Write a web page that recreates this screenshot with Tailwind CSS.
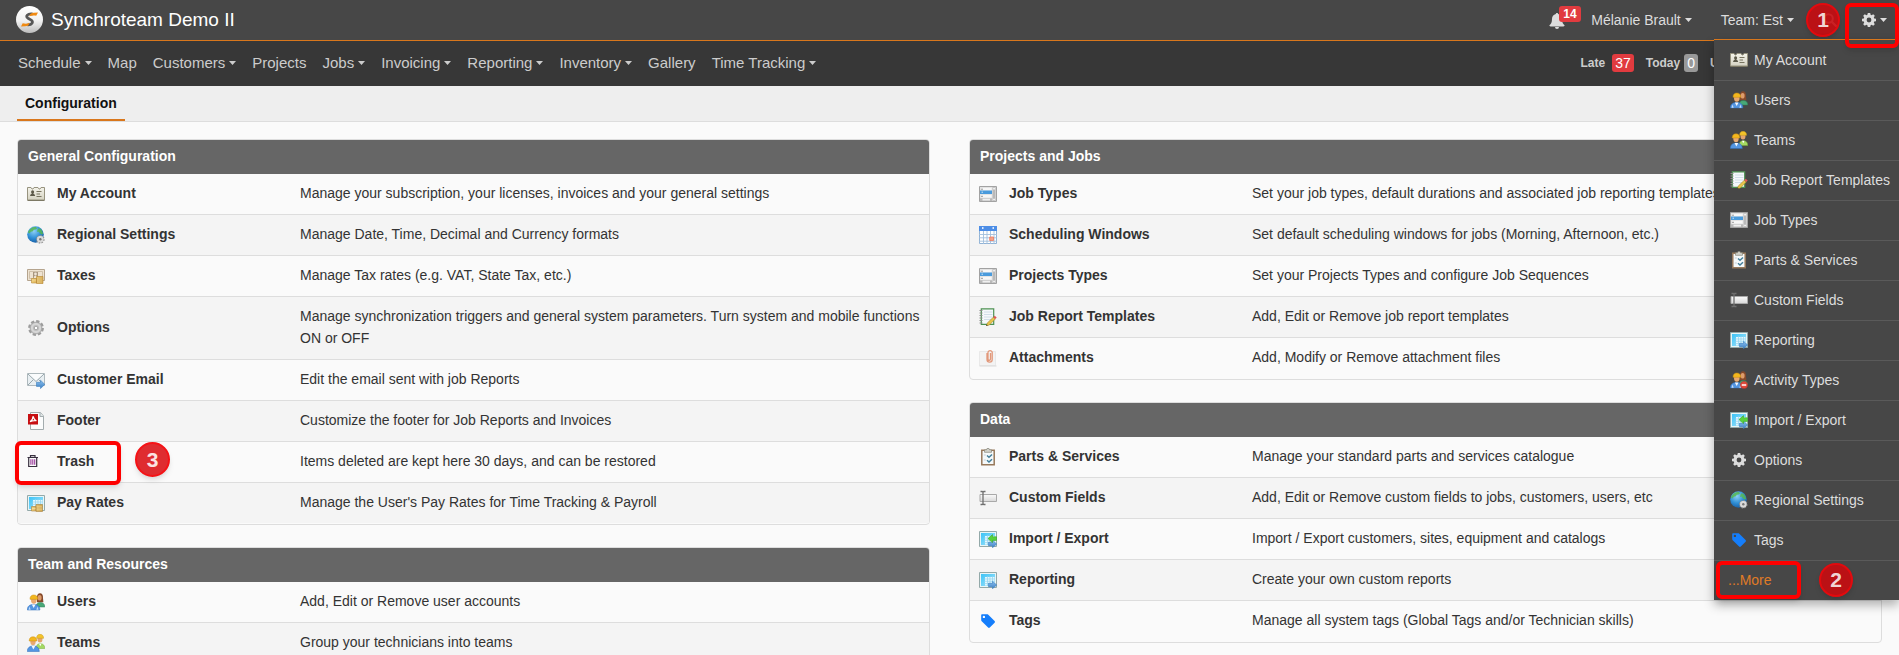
<!DOCTYPE html>
<html lang="en">
<head>
    <meta charset="UTF-8">
    <meta name="viewport" content="width=device-width, initial-scale=1.0">
    <title>Synchroteam - Configuration</title>
    <script src="https://cdn.jsdelivr.net/npm/@tailwindcss/browser@4"></script>
</head>
<body class="flex flex-col h-screen overflow-hidden bg-[#fafafa] text-[#333] text-sm font-['Liberation_Sans',Arial,sans-serif]">

    <!-- icon sprite, zero sized but not display:none so the gradients keep working -->
    <svg class="absolute size-0" aria-hidden="true">
        <defs>
            <linearGradient id="g-ball" x1="0" y1="0" x2="0" y2="1"><stop offset="0" stop-color="#fff"/><stop offset=".55" stop-color="#f2f2f2"/><stop offset="1" stop-color="#bdbdbd"/></linearGradient>
            <linearGradient id="g-card" x1="0" y1="0" x2="0" y2="1"><stop offset="0" stop-color="#f4f3ea"/><stop offset="1" stop-color="#d5d2c2"/></linearGradient>
            <radialGradient id="g-globe" cx=".4" cy=".3" r=".7"><stop offset="0" stop-color="#8fd0f5"/><stop offset=".6" stop-color="#2f8fd6"/><stop offset="1" stop-color="#1b62a8"/></radialGradient>
            <linearGradient id="g-sheet" x1="0" y1="0" x2="1" y2="1"><stop offset="0" stop-color="#3cc3f7"/><stop offset="1" stop-color="#a9e6fb"/></linearGradient>
            <linearGradient id="g-coin" x1="0" y1="0" x2="1" y2="0"><stop offset="0" stop-color="#f0cf7c"/><stop offset="1" stop-color="#c8983a"/></linearGradient>
            <linearGradient id="g-grey" x1="0" y1="0" x2="0" y2="1"><stop offset="0" stop-color="#fbfbfb"/><stop offset="1" stop-color="#d8d8d8"/></linearGradient>
            <linearGradient id="g-blue" x1="0" y1="0" x2="0" y2="1"><stop offset="0" stop-color="#8cc0ef"/><stop offset="1" stop-color="#3c80c4"/></linearGradient>
        </defs>
        <symbol id="caret" viewBox="0 0 7 4"><path fill="currentColor" d="M0 0h7L3.5 4z"/></symbol>
        <symbol id="gear" viewBox="0 0 14 14"><path fill="currentColor" fill-rule="evenodd" d="M5.800 0h2.400l.4 1.800 1 .4 1.600-1 1.600 1.600-1 1.600.4 1 1.800.4v2.400l-1.800.4-.4 1 1 1.600-1.600 1.600-1.600-1-1 .4-.4 1.800H5.800l-.4-1.800-1-.4-1.600 1-1.600-1.600 1-1.600-.4-1L0 8.200V5.800l1.800-.4.4-1-1-1.600 1.600-1.600 1.600 1 1-.4zM7 4.600a2.400 2.400 0 1 0 0 4.800 2.400 2.400 0 0 0 0-4.800z"/></symbol>
        <symbol id="bell" viewBox="0 0 16 16"><path fill="currentColor" d="M8 0c.7 0 1.200.5 1.200 1.100C11.600 1.600 13 3.500 13 6c0 3.500 1 5 2.600 6.300 0 .7-.5 1.200-1.200 1.200H1.600c-.7 0-1.200-.5-1.200-1.200C2 11 3 9.500 3 6c0-2.500 1.400-4.400 3.800-4.900C6.800.5 7.300 0 8 0zM6 14h4a2 2 0 0 1-4 0z"/></symbol>
        <symbol id="search" viewBox="0 0 14 14"><circle cx="5.500" cy="5.500" r="4.300" fill="none" stroke="currentColor" stroke-width="2"/><path d="M9 9l4 4" stroke="currentColor" stroke-width="2.400" stroke-linecap="round"/></symbol>
        <symbol id="account" viewBox="0 0 18 18">
            <path fill="url(#g-card)" stroke="#97937f" d="M.5 2.500h3.500l1 1.500h1l1-1.500h4l1 1.500h1l1-1.500h3.500v12.500H.5z"/>
            <path fill="#5d5a4a" d="M5.600 5.200a1.500 1.500 0 0 1 1.500 1.600c0 .9-.5 1.700-.9 1.900 1.200.3 1.900 1 1.900 2.300H3.100c0-1.300.7-2 1.900-2.300-.4-.2-.9-1-.9-1.900a1.500 1.500 0 0 1 1.500-1.600z"/>
            <path stroke="#77735f" d="M9.500 6.500h5M9.500 9h3.500M9.500 11.500h5"/><path stroke="#7d7965" d="M.5 15.500h17"/>
        </symbol>
        <symbol id="globe" viewBox="0 0 18 18">
            <circle cx="8.500" cy="8.500" r="8.300" fill="url(#g-globe)"/>
            <path fill="#58b947" fill-opacity=".8" d="M4 2.600c1.700-1.300 3.800-1.700 5.200-1.400l.8 1.300-1.500 1-1.700.3-1 1.400-2 .6-1.300 1.600L1 6.500c.5-1.600 1.600-3 3-3.900zM11 2.500l2.500.3 1.700 2.200.9 3-1.600.4-2-1.300-.6-1.400-2 .1z"/>
            <circle cx="13.300" cy="13.300" r="3.500" fill="#d0d0d0" stroke="#8d8d8d" stroke-width="1.600" stroke-dasharray="1.500 1.200"/><circle cx="13.300" cy="13.300" r="3.200" fill="#dadada"/><circle cx="13.300" cy="13.300" r="1.200" fill="#777"/>
        </symbol>
        <symbol id="taxes" viewBox="0 0 18 18">
            <path fill="#eee3d2" stroke="#b5a48e" d="M.5 2.500h17v11H.5z"/><path fill="none" stroke="#cfc0aa" d="M2.500 4.500h13v7h-13z"/>
            <path fill="#a8957d" d="M6 5h5v6H6z"/><circle cx="8.500" cy="7" r="1.400" fill="#efe5d6"/><path fill="#efe5d6" d="M6.800 11c0-1.800.6-2.300 1.700-2.300s1.700.5 1.700 2.300z"/>
            <path fill="url(#g-coin)" stroke="#b98a37" stroke-width=".6" d="M4.500 11.500h5v4.500h-5zM9.500 9.500h6.500v7H9.500z"/><path stroke="#f6e1a6" stroke-width=".7" d="M5 13h4M10 11h5.500M10 13h5.500M10 15h5.500"/>
        </symbol>
        <symbol id="cog" viewBox="0 0 18 18">
            <circle cx="9" cy="9" r="6.600" fill="#c6c6c6" stroke="#9d9d9d" stroke-width="2.600" stroke-dasharray="3.200 1.980"/>
            <circle cx="9" cy="9" r="5.600" fill="#d6d6d6" stroke="#a6a6a6" stroke-width=".7"/><circle cx="9" cy="9" r="3" fill="#bcbcbc"/><circle cx="9" cy="9" r="1.700" fill="#fff" stroke="#888" stroke-width=".6"/>
        </symbol>
        <symbol id="email" viewBox="0 0 18 18">
            <path fill="#e9eff2" stroke="#aeb9bd" d="M.5 2.500h17v12H.5z"/><path fill="#fafcfd" stroke="#98a7ad" d="M1 3l8 7.500L17 3M1 14l5.500-5.500M17 14l-5.500-5.500"/>
            <path fill="url(#g-blue)" stroke="#3b7dbd" stroke-width=".6" d="M9.500 11.300h4V9.200l4.300 4.200-4.300 4.200v-2.200h-4z"/>
        </symbol>
        <symbol id="pdf" viewBox="0 0 18 18">
            <path fill="#fbfcfc" stroke="#a3acae" d="M3.500.5h10L16.500 4v13.500h-13z"/><path fill="#dfe5e6" stroke="#a3acae" d="M13 .5V4.500h3.500"/>
            <path fill="#c70f12" d="M1 2h10v10.500H1z"/><path fill="none" stroke="#fff" stroke-width="1.100" d="M3 9.800C5 8.500 6 6 6 4.200c1 2.800 2 4.200 3.500 4.600-2-.4-4.500 0-6.500 1z"/>
        </symbol>
        <symbol id="trash" viewBox="0 0 18 18">
            <path fill="none" stroke="#38303f" stroke-width="1.200" d="M.5 4.500h10.500M3.500 4V2.600h4.500V4M1.700 5v8.500h8V5"/><path stroke="#9a3a9b" stroke-width="1.100" d="M3.900 6.200v5.600M5.800 6.200v5.600M7.700 6.200v5.600"/>
        </symbol>
        <symbol id="sheet" viewBox="0 0 18 18">
            <path fill="#e9f5f7" stroke="#93a9a9" d="M.5 1.500h17v15H.5z"/><path fill="url(#g-sheet)" d="M2 3h14v12H2z"/>
            <path fill="#e4f7fe" d="M6 6h9.500v8.500H6z"/><path stroke="#8fd3ee" stroke-width=".7" d="M8.500 5v10M11 5v10M13.500 5v10M5 8h11M5 10.300h11M5 12.600h11"/>
        </symbol>
        <symbol id="pay" viewBox="0 0 18 18">
            <use href="#sheet"/><path fill="url(#g-coin)" stroke="#a98443" stroke-width=".6" d="M4.500 12.500h4.500V17H4.500zM9 10.500h6.500v7H9z"/><path stroke="#f6e1a6" stroke-width=".7" d="M9.500 12.200H15M9.500 14H15M9.500 15.800H15M5 14.500h3.500"/>
        </symbol>
        <symbol id="reporting" viewBox="0 0 18 18">
            <use href="#sheet"/><path fill="url(#g-blue)" stroke="#3b7dbd" stroke-width=".6" d="M9.500 12.300h4v-2l4.200 3.700-4.200 3.700v-2h-4z"/>
        </symbol>
        <symbol id="import" viewBox="0 0 18 18">
            <use href="#reporting"/><path fill="#58d23c" stroke="#3ba728" stroke-width=".6" d="M17.500 6.800h-4V4.600L9 8.600l4.500 4v-2.200h4z"/>
        </symbol>
        <symbol id="users" viewBox="0 0 18 18">
            <path fill="#86492a" d="M10 5C9.700 2 11 .3 13 .3s3.300 1.700 3 5l.4 4H10z"/><ellipse cx="12.600" cy="4.800" rx="2" ry="2.800" fill="#dd9c6c"/>
            <path fill="#48a878" stroke="#2c8059" stroke-width=".5" d="M9 14c0-3 1.500-4.500 4.300-4.500S17.800 11 17.800 14z"/>
            <ellipse cx="6.800" cy="7" rx="2.800" ry="3.800" fill="#e9a970"/><path fill="#f3b71d" stroke="#c98a10" stroke-width=".5" d="M3 6.300C3 3.300 4.500 2 6.800 2s4 1.300 4 4.300z"/>
            <path fill="#5496e2" stroke="#2d6cba" stroke-width=".5" d="M.3 17c0-3.700 2.200-5.500 6.300-5.500s6.300 1.800 6.300 5.500z"/><path fill="#f4f8fd" d="M4.800 11.500h3.700L6.700 15z"/><path fill="#c2dcf7" d="M2.500 13.500l1.200 3.200H1.500zM10.500 13.500l-1.200 3.200h2.200z"/>
        </symbol>
        <symbol id="teams" viewBox="0 0 18 18">
            <ellipse cx="13" cy="5" rx="2.500" ry="3.600" fill="#e3a56e"/><path fill="#f3c32a" stroke="#c99a1a" stroke-width=".5" d="M9.600 4.300C9.600 1.600 11 .3 13 .3s3.600 1.300 3.600 4z"/>
            <path fill="#a4d963" stroke="#74ac35" stroke-width=".5" d="M9 14.500c0-3.200 1.500-4.800 4.300-4.800s4.500 1.600 4.500 4.800z"/><path fill="#fff" d="M12 9.700h2.500l-1.200 2.500z"/>
            <ellipse cx="6" cy="7.600" rx="2.700" ry="3.700" fill="#e9a970"/><path fill="#f3b71d" stroke="#c98a10" stroke-width=".5" d="M2.200 7c0-2.900 1.500-4.200 3.800-4.200S9.800 4.100 9.800 7z"/>
            <path fill="#5496e2" stroke="#2d6cba" stroke-width=".5" d="M.3 17.500c0-3.700 2.200-5.500 6-5.500s6 1.800 6 5.500z"/><path fill="#f4f8fd" d="M4.500 12h3.700l-1.800 3.500z"/>
        </symbol>
        <symbol id="activity" viewBox="0 0 18 18">
            <use href="#users"/><circle cx="14" cy="14" r="3.600" fill="#df4a3d" stroke="#b33128" stroke-width=".6"/><path stroke="#fff" stroke-width="1.500" d="M11.800 14h4.400"/>
        </symbol>
        <symbol id="jobtypes" viewBox="0 0 18 18">
            <path fill="#e4e4e4" stroke="#a2a2a2" d="M.5 1.500h17v15H.5z"/><path fill="#f7f7f7" d="M2 3h10.500v2.500H2zM2 10h10.500v2.500H2z"/><path fill="#4a9bdc" d="M1 5.500h12V9H1z"/><path fill="#b9b9b9" d="M13.500 2v14h3V2zM1 13.200h12v2.800H1z"/><path fill="#f0f0f0" d="M3.500 13.700h7.500v1.800H3.500z"/>
            <path fill="#fff" d="M14.300 2.800h1.500v1.700h-1.500zM14.300 13.700h1.500v1.600h-1.500z"/><path stroke="#9a9a9a" d="M2 4.200h2M2 11.300h2"/><path stroke="#cfe6f8" d="M2.500 7.200h1.500"/>
        </symbol>
        <symbol id="calendar" viewBox="0 0 18 18">
            <path fill="#fff" stroke="#91b3d6" d="M.5.500h17v17H.5z"/><path fill="#4c8de6" d="M0 0h18v5H0z"/><path fill="#dce9fa" d="M3 1h1.500v2H3zM13.500 1H15v2h-1.500z"/>
            <path stroke="#a3bfdc" stroke-width=".9" d="M4.500 5v13M8 5v13M11.500 5v13M15 5v13M0 8.500h18M0 11.800h18M0 15.200h18"/><path fill="#f5a389" stroke="#ee7b5f" stroke-width=".8" d="M10.700 11h3.800v3.500h-3.800z"/>
        </symbol>
        <symbol id="notebook" viewBox="0 0 18 18">
            <path fill="#f5f8fb" stroke="#4d9152" stroke-width="1.200" d="M2.300.8h12.400v15.600H2.300z"/><path stroke="#c9d7e4" stroke-width=".8" d="M5 4h8.500M5 6.500h8.500M5 9h8.500M5 11.500h8.500"/>
            <path stroke="#8c8c8c" stroke-width="1.200" d="M.5 2.500h3M.5 5h3M.5 7.500h3M.5 10h3M.5 12.500h3M.5 15h3"/>
            <path fill="#e7c44c" stroke="#9b7c22" stroke-width=".5" d="M14.300 9.200l2 1.700-6 6.200-2.800.6.700-2.600z"/><path fill="#dd5757" d="M14.300 9.200L15.700 7.800l2 1.700-1.400 1.400z"/><path fill="#333" d="M7.200 18l.4-1.500 1.200.9z"/>
        </symbol>
        <symbol id="clip" viewBox="0 0 18 18">
            <path fill="#f3f3f3" stroke="#e9e9e9" d="M.5 2.500h16v14H.5z"/><path stroke="#dadada" d="M.5 17h17"/>
            <path fill="none" stroke="#e2987a" stroke-width="1.300" d="M8 4v6.500a2.600 2.600 0 0 0 5.200 0V3A2.300 2.300 0 0 0 9 3v7a1.100 1.100 0 0 0 2.500 0V4"/>
        </symbol>
        <symbol id="clipboard" viewBox="0 0 18 18">
            <path fill="#f5f9fa" stroke="#97795b" stroke-width="1.500" d="M2.800 2.300h12.400v14.500H2.800z"/><path fill="#d3d3cb" stroke="#85857a" stroke-width=".7" d="M5.500 1.800h2L8 .5h2l.5 1.300h2v2.500h-7z"/>
            <path fill="none" stroke="#447f9a" stroke-width="1.500" d="M8 7.500l2 1.800L13 6.500M8 12.300l2 1.800 3-2.800"/><path stroke="#c3d0d6" d="M4.800 7h2M4.800 12h2"/>
        </symbol>
        <symbol id="field" viewBox="0 0 18 18">
            <path fill="url(#g-grey)" stroke="#a9a9a9" d="M1 5.500h16.500v7H1z"/><path fill="none" stroke="#6f6f6f" stroke-width="1.300" d="M1.500 2.500h1.700l.8.700.8-.7h1.700M4 3v12M1.500 15.500h1.700l.8-.7.8.7h1.700"/>
        </symbol>
        <symbol id="tag" viewBox="0 0 18 18"><path fill="#157efb" fill-rule="evenodd" d="M2.200 3.200c0-.6.500-1 1-1H8c.5 0 .9.100 1.300.5l6.300 6.300c.5.500.5 1.200 0 1.700l-4.800 4.800c-.5.5-1.200.5-1.700 0L2.700 9.200c-.3-.3-.5-.7-.5-1.200zM4.900 3.700a1.200 1.200 0 1 0 0 2.400 1.200 1.200 0 0 0 0-2.400z"/></symbol>
        <symbol id="options" viewBox="0 0 18 18"><svg x="2" y="2" width="14" height="14" color="#dcdcdc"><use href="#gear"/></svg></symbol>
    </svg>

    <header class="relative z-10 shrink-0 text-[#ddd]">
        <div class="flex h-[41px] items-center border-b border-[#d9771c] bg-[#474747] pl-4">
            <a href="#" class="flex items-center gap-2 text-[19px] text-white">
                <svg class="size-[27px]" viewBox="0 0 27 27" aria-hidden="true">
                    <circle cx="13.500" cy="13.500" r="13.500" fill="url(#g-ball)"/>
                    <path fill="none" stroke="#575757" stroke-width="2.800" d="M16.500 8c-5-.6-7.500 2.200-4.500 4.200l3.200 1.900c2.600 1.700.8 5-3.700 4.700"/>
                    <path fill="#f08a12" d="M22 6.500l-1.800 3.200c-2.300-.5-5-.3-6.700.6 0-2.400 1.800-3.500 4.200-3.600zM5 20.500l1.700-3.300c2.200.7 4.800.6 6.600-.5.300 2.300-1.600 3.600-4 3.600z"/>
                </svg>
                Synchroteam Demo II
            </a>
            <div class="ml-auto flex items-center pr-3">
                <button type="button" class="relative mr-[26px] h-10 w-4" aria-label="Notifications">
                    <svg class="mt-px size-4"><use href="#bell"/></svg>
                    <span class="absolute left-[10px] top-[6px] rounded-[3px] bg-[#e13b3f] px-1 text-xs leading-4 font-bold text-white">14</span>
                </button>
                <button type="button" class="mr-[29px] flex items-center gap-1">Mélanie Brault <svg class="h-1 w-[7px]"><use href="#caret"/></svg></button>
                <button type="button" class="mr-[29px] flex items-center gap-1">Team: Est <svg class="h-1 w-[7px]"><use href="#caret"/></svg></button>
                <button type="button" class="relative mr-[25px]" aria-label="Search">
                    <svg class="size-[14px]"><use href="#search"/></svg>
                    <span class="absolute -left-[17px] -top-[10px] flex size-[34px] items-center justify-center rounded-full border-2 border-[#e30a0e] bg-[#c80b10]/90 text-[21px] font-bold text-[#f0d4d4] shadow-md">1</span>
                </button>
                <button type="button" class="relative flex items-center gap-1" aria-label="Settings">
                    <svg class="size-[14px]"><use href="#gear"/></svg>
                    <svg class="h-1 w-[7px]"><use href="#caret"/></svg>
                    <span class="absolute -left-[17px] -top-[10px] z-20 h-[45px] w-[54px] rounded-md border-4 border-[#fe0000] shadow-md"></span>
                </button>
            </div>
        </div>

        <div class="flex h-[45px] items-center bg-[#373737] pb-0.5 pl-[18px] text-[15px] text-[#ccc]">
            <nav class="flex gap-4">
                <a href="#" class="flex items-center gap-1">Schedule <svg class="mt-0.5 h-1 w-[7px]"><use href="#caret"/></svg></a>
                <a href="#">Map</a>
                <a href="#" class="flex items-center gap-1">Customers <svg class="mt-0.5 h-1 w-[7px]"><use href="#caret"/></svg></a>
                <a href="#">Projects</a>
                <a href="#" class="flex items-center gap-1">Jobs <svg class="mt-0.5 h-1 w-[7px]"><use href="#caret"/></svg></a>
                <a href="#" class="flex items-center gap-1">Invoicing <svg class="mt-0.5 h-1 w-[7px]"><use href="#caret"/></svg></a>
                <a href="#" class="flex items-center gap-1">Reporting <svg class="mt-0.5 h-1 w-[7px]"><use href="#caret"/></svg></a>
                <a href="#" class="flex items-center gap-1">Inventory <svg class="mt-0.5 h-1 w-[7px]"><use href="#caret"/></svg></a>
                <a href="#">Gallery</a>
                <a href="#" class="flex items-center gap-1">Time Tracking <svg class="mt-0.5 h-1 w-[7px]"><use href="#caret"/></svg></a>
            </nav>
            <div class="ml-auto flex items-center text-xs font-bold">
                <span>Late</span>
                <span class="ml-[7px] mr-3 rounded-[3px] bg-[#e13b3f] px-[3px] text-sm leading-[18px] font-normal text-white">37</span>
                <span>Today</span>
                <span class="ml-1 mr-3 rounded-[3px] bg-[#999] px-[3px] text-sm leading-[18px] font-normal text-white">0</span>
                <span class="mr-[185px] w-1 overflow-hidden">U</span>
            </div>
        </div>

        <ul class="absolute right-0 top-[39px] w-[185px] divide-y divide-[#5a5a5a] border-t border-[#d9771c] bg-[#474747] text-[#ddd] shadow-[0_5px_10px_rgba(0,0,0,0.3)]">
            <li><a href="#" class="flex h-10 items-center gap-1.5 pl-4"><svg class="size-[18px]"><use href="#account"/></svg>My Account</a></li>
            <li><a href="#" class="flex h-[39px] items-center gap-1.5 pb-px pl-4"><svg class="size-[18px]"><use href="#users"/></svg>Users</a></li>
            <li><a href="#" class="flex h-[39px] items-center gap-1.5 pb-px pl-4"><svg class="size-[18px]"><use href="#teams"/></svg>Teams</a></li>
            <li><a href="#" class="flex h-[39px] items-center gap-1.5 pb-px pl-4"><svg class="size-[18px]"><use href="#notebook"/></svg>Job Report Templates</a></li>
            <li><a href="#" class="flex h-[39px] items-center gap-1.5 pb-px pl-4"><svg class="size-[18px]"><use href="#jobtypes"/></svg>Job Types</a></li>
            <li><a href="#" class="flex h-[39px] items-center gap-1.5 pb-px pl-4"><svg class="size-[18px]"><use href="#clipboard"/></svg>Parts &amp; Services</a></li>
            <li><a href="#" class="flex h-[39px] items-center gap-1.5 pb-px pl-4"><svg class="size-[18px]"><use href="#field"/></svg>Custom Fields</a></li>
            <li><a href="#" class="flex h-[39px] items-center gap-1.5 pb-px pl-4"><svg class="size-[18px]"><use href="#reporting"/></svg>Reporting</a></li>
            <li><a href="#" class="flex h-[39px] items-center gap-1.5 pb-px pl-4"><svg class="size-[18px]"><use href="#activity"/></svg>Activity Types</a></li>
            <li><a href="#" class="flex h-[39px] items-center gap-1.5 pb-px pl-4"><svg class="size-[18px]"><use href="#import"/></svg>Import / Export</a></li>
            <li><a href="#" class="flex h-[39px] items-center gap-1.5 pb-px pl-4"><svg class="size-[18px]"><use href="#options"/></svg>Options</a></li>
            <li><a href="#" class="flex h-[39px] items-center gap-1.5 pb-px pl-4"><svg class="size-[18px]"><use href="#globe"/></svg>Regional Settings</a></li>
            <li><a href="#" class="flex h-[39px] items-center gap-1.5 pb-px pl-4"><svg class="size-[18px]"><use href="#tag"/></svg>Tags</a></li>
            <li class="relative">
                <a href="#" class="flex h-[39px] items-center pb-px pl-[14px] text-[#e07b26]">...More</a>
                <span class="absolute left-[2px] top-0 h-[38px] w-[85px] rounded-md border-4 border-[#fe0000] shadow-md"></span>
                <span class="absolute left-[105px] top-[2px] flex size-[34px] items-center justify-center rounded-full border-2 border-[#e30a0e] bg-[#c80b10]/90 text-[21px] font-bold text-[#f0d4d4] shadow-md">2</span>
            </li>
        </ul>
    </header>

    <div class="flex h-9 shrink-0 border-b border-[#ddd] bg-[#eee] px-[17px]">
        <a href="#" class="h-[35px] border-b-2 border-[#d9771c] px-2 leading-[34px] font-bold text-[#111]">Configuration</a>
    </div>

    <main class="grid grid-cols-2 items-start gap-x-[39px] px-[17px] pt-[17px]">
        <div class="flex flex-col gap-[22px]">
            <section class="rounded border border-[#ddd] pb-px">
                <h2 class="h-[34px] rounded-t-[3px] bg-[#666] px-[10px] leading-[33px] font-bold text-white">General Configuration</h2>
                <table class="w-full table-fixed leading-[22px]">
                    <colgroup><col class="w-[39px]"><col class="w-[243px]"><col></colgroup>
                    <tbody class="divide-y divide-[#ddd]">
                        <tr><td class="pl-[9px]"><svg class="size-[18px]"><use href="#account"/></svg></td><th class="pb-0.5 text-left">My Account</th><td class="pt-2 pb-[10px]">Manage your subscription, your licenses, invoices and your general settings</td></tr>
                        <tr class="bg-[#f4f4f4]"><td class="pl-[9px]"><svg class="size-[18px]"><use href="#globe"/></svg></td><th class="pb-0.5 text-left">Regional Settings</th><td class="pt-2 pb-[10px]">Manage Date, Time, Decimal and Currency formats</td></tr>
                        <tr><td class="pl-[9px]"><svg class="size-[18px]"><use href="#taxes"/></svg></td><th class="pb-0.5 text-left">Taxes</th><td class="pt-2 pb-[10px]">Manage Tax rates (e.g. VAT, State Tax, etc.)</td></tr>
                        <tr class="bg-[#f4f4f4]"><td class="pl-[9px]"><svg class="size-[18px]"><use href="#cog"/></svg></td><th class="pb-0.5 text-left">Options</th><td class="pt-2 pr-1 pb-[10px]">Manage synchronization triggers and general system parameters. Turn system and mobile functions ON or OFF</td></tr>
                        <tr><td class="pl-[9px]"><svg class="size-[18px]"><use href="#email"/></svg></td><th class="pb-0.5 text-left">Customer Email</th><td class="pt-2 pb-[10px]">Edit the email sent with job Reports</td></tr>
                        <tr class="bg-[#f4f4f4]"><td class="pl-[9px]"><svg class="size-[18px]"><use href="#pdf"/></svg></td><th class="pb-0.5 text-left">Footer</th><td class="pt-2 pb-[10px]">Customize the footer for Job Reports and Invoices</td></tr>
                        <tr>
                            <td class="relative pl-[9px]">
                                <svg class="size-[18px]"><use href="#trash"/></svg>
                                <span class="absolute -left-[3px] -top-px h-11 w-[106px] rounded-md border-4 border-[#fe0000] shadow-md"></span>
                                <span class="absolute left-[117px] top-0 flex size-[35px] items-center justify-center rounded-full border-2 border-[#f51216] bg-[#df2c30] text-[21px] font-bold text-[#fbe3e3] shadow-md">3</span>
                            </td>
                            <th class="pb-0.5 text-left">Trash</th><td class="pt-2 pb-[10px]">Items deleted are kept here 30 days, and can be restored</td>
                        </tr>
                        <tr class="bg-[#f4f4f4]"><td class="pl-[9px]"><svg class="size-[18px]"><use href="#pay"/></svg></td><th class="pb-0.5 text-left">Pay Rates</th><td class="pt-2 pb-[10px]">Manage the User's Pay Rates for Time Tracking &amp; Payroll</td></tr>
                    </tbody>
                </table>
            </section>

            <section class="rounded border border-[#ddd] pb-px">
                <h2 class="h-[34px] rounded-t-[3px] bg-[#666] px-[10px] leading-[33px] font-bold text-white">Team and Resources</h2>
                <table class="w-full table-fixed leading-[22px]">
                    <colgroup><col class="w-[39px]"><col class="w-[243px]"><col></colgroup>
                    <tbody class="divide-y divide-[#ddd]">
                        <tr><td class="pl-[9px]"><svg class="size-[18px]"><use href="#users"/></svg></td><th class="pb-0.5 text-left">Users</th><td class="pt-2 pb-[10px]">Add, Edit or Remove user accounts</td></tr>
                        <tr class="bg-[#f4f4f4]"><td class="pl-[9px]"><svg class="size-[18px]"><use href="#teams"/></svg></td><th class="pb-0.5 text-left">Teams</th><td class="pt-2 pb-[10px]">Group your technicians into teams</td></tr>
                    </tbody>
                </table>
            </section>
        </div>

        <div class="flex flex-col gap-[22px]">
            <section class="rounded border border-[#ddd] pb-px">
                <h2 class="h-[34px] rounded-t-[3px] bg-[#666] px-[10px] leading-[33px] font-bold text-white">Projects and Jobs</h2>
                <table class="w-full table-fixed leading-[22px]">
                    <colgroup><col class="w-[39px]"><col class="w-[243px]"><col></colgroup>
                    <tbody class="divide-y divide-[#ddd]">
                        <tr><td class="pl-[9px]"><svg class="size-[18px]"><use href="#jobtypes"/></svg></td><th class="pb-0.5 text-left">Job Types</th><td class="pt-2 pb-[10px]">Set your job types, default durations and associated job reporting templates</td></tr>
                        <tr class="bg-[#f4f4f4]"><td class="pl-[9px]"><svg class="size-[18px]"><use href="#calendar"/></svg></td><th class="pb-0.5 text-left">Scheduling Windows</th><td class="pt-2 pb-[10px]">Set default scheduling windows for jobs (Morning, Afternoon, etc.)</td></tr>
                        <tr><td class="pl-[9px]"><svg class="size-[18px]"><use href="#jobtypes"/></svg></td><th class="pb-0.5 text-left">Projects Types</th><td class="pt-2 pb-[10px]">Set your Projects Types and configure Job Sequences</td></tr>
                        <tr class="bg-[#f4f4f4]"><td class="pl-[9px]"><svg class="size-[18px]"><use href="#notebook"/></svg></td><th class="pb-0.5 text-left">Job Report Templates</th><td class="pt-2 pb-[10px]">Add, Edit or Remove job report templates</td></tr>
                        <tr><td class="pl-[9px]"><svg class="size-[18px]"><use href="#clip"/></svg></td><th class="pb-0.5 text-left">Attachments</th><td class="pt-2 pb-[10px]">Add, Modify or Remove attachment files</td></tr>
                    </tbody>
                </table>
            </section>

            <section class="rounded border border-[#ddd] pb-px">
                <h2 class="h-[34px] rounded-t-[3px] bg-[#666] px-[10px] leading-[33px] font-bold text-white">Data</h2>
                <table class="w-full table-fixed leading-[22px]">
                    <colgroup><col class="w-[39px]"><col class="w-[243px]"><col></colgroup>
                    <tbody class="divide-y divide-[#ddd]">
                        <tr><td class="pl-[9px]"><svg class="size-[18px]"><use href="#clipboard"/></svg></td><th class="pb-0.5 text-left">Parts &amp; Services</th><td class="pt-2 pb-[10px]">Manage your standard parts and services catalogue</td></tr>
                        <tr class="bg-[#f4f4f4]"><td class="pl-[9px]"><svg class="size-[18px]"><use href="#field"/></svg></td><th class="pb-0.5 text-left">Custom Fields</th><td class="pt-2 pb-[10px]">Add, Edit or Remove custom fields to jobs, customers, users, etc</td></tr>
                        <tr><td class="pl-[9px]"><svg class="size-[18px]"><use href="#import"/></svg></td><th class="pb-0.5 text-left">Import / Export</th><td class="pt-2 pb-[10px]">Import / Export customers, sites, equipment and catalogs</td></tr>
                        <tr class="bg-[#f4f4f4]"><td class="pl-[9px]"><svg class="size-[18px]"><use href="#reporting"/></svg></td><th class="pb-0.5 text-left">Reporting</th><td class="pt-2 pb-[10px]">Create your own custom reports</td></tr>
                        <tr><td class="pl-[9px]"><svg class="size-[18px]"><use href="#tag"/></svg></td><th class="pb-0.5 text-left">Tags</th><td class="pt-2 pb-[10px]">Manage all system tags (Global Tags and/or Technician skills)</td></tr>
                    </tbody>
                </table>
            </section>
        </div>
    </main>
</body>
</html>
